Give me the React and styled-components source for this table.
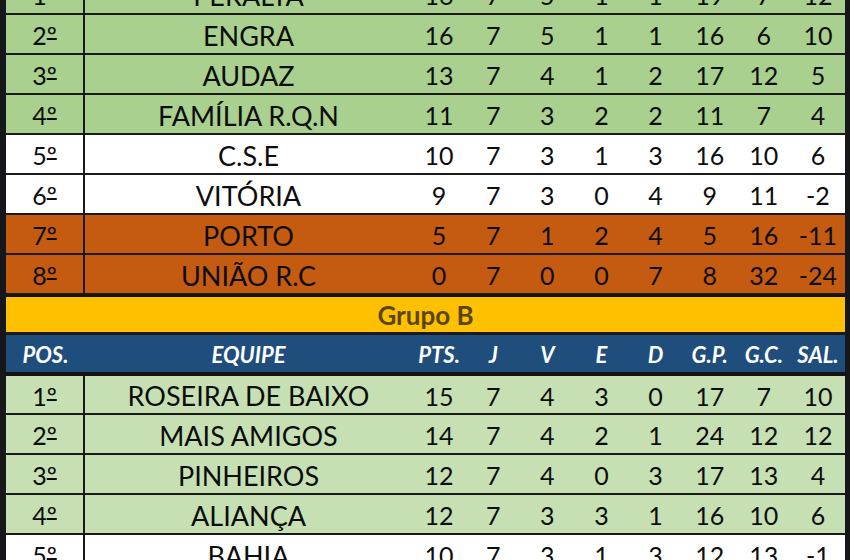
import React from "react";
import styled, { createGlobalStyle } from "styled-components";

const GlobalStyle = createGlobalStyle`
  html, body {
    margin: 0;
    padding: 0;
    background: #fff;
    overflow: hidden;
  }
  body {
    font-family: Lato, "Open Sans", sans-serif;
  }
`;

const groupA = [
  [1, "PERALTA", 16, 7, 5, 1, 1, 19, 7, 12],
  [2, "ENGRA", 16, 7, 5, 1, 1, 16, 6, 10],
  [3, "AUDAZ", 13, 7, 4, 1, 2, 17, 12, 5],
  [4, "FAMÍLIA R.Q.N", 11, 7, 3, 2, 2, 11, 7, 4],
  [5, "C.S.E", 10, 7, 3, 1, 3, 16, 10, 6],
  [6, "VITÓRIA", 9, 7, 3, 0, 4, 9, 11, -2],
  [7, "PORTO", 5, 7, 1, 2, 4, 5, 16, -11],
  [8, "UNIÃO R.C", 0, 7, 0, 0, 7, 8, 32, -24],
];

const groupB = [
  [1, "ROSEIRA DE BAIXO", 15, 7, 4, 3, 0, 17, 7, 10],
  [2, "MAIS AMIGOS", 14, 7, 4, 2, 1, 24, 12, 12],
  [3, "PINHEIROS", 12, 7, 4, 0, 3, 17, 13, 4],
  [4, "ALIANÇA", 12, 7, 3, 3, 1, 16, 10, 6],
  [5, "BAHIA", 10, 7, 3, 1, 3, 12, 13, -1],
];

const headers = ["PTS.", "J", "V", "E", "D", "G.P.", "G.C.", "SAL."];

const colorsA = ["green", "green", "green", "green", "white", "white", "orange", "orange"];
const colorsB = ["light", "light", "light", "light", "white"];

const fills = {
  green: "#a9d08e",
  light: "#c6e0b4",
  white: "#ffffff",
  orange: "#c55a11",
};

const Sheet = styled.div`
  width: 850px;
  box-sizing: border-box;
  margin-top: -25px;
  border-left: 6px solid #15171a;
  border-right: 5px solid #15171a;
`;

const Row = styled.div`
  display: grid;
  grid-template-columns: 79px 327px repeat(8, 1fr);
  height: ${({ $h }) => $h || 40}px;
  box-sizing: border-box;
  border-bottom: 2px solid #1a1a1a;
  background: ${({ $fill }) => fills[$fill]};
  color: #0d0d0d;
  font-size: 25px;
`;

const Cell = styled.div`
  display: flex;
  align-items: center;
  justify-content: center;
  white-space: nowrap;
  padding-top: 2px;
`;

const PosCell = styled(Cell)`
  border-right: 2px solid #1a1a1a;
`;

const NameCell = styled(Cell)`
  font-size: 27px;
`;

const Ord = styled.span`
  text-decoration: underline;
  text-decoration-thickness: 2px;
  text-underline-offset: -7px;
  text-decoration-skip-ink: none;
`;

const GroupTitle = styled.div`
  height: 40px;
  box-sizing: border-box;
  border-top: 2px solid #111;
  border-bottom: 3px solid #1a1a1a;
  background: #ffc000;
  display: flex;
  align-items: center;
  justify-content: center;
  font-weight: 700;
  font-size: 26px;
  color: #5a4608;
`;

const HeadRow = styled.div`
  display: grid;
  grid-template-columns: 79px 327px repeat(8, 1fr);
  height: 41px;
  box-sizing: border-box;
  border-bottom: 4px solid #141414;
  background: #1f4e7d;
  color: #fff;
  font-size: 22px;
  font-weight: 700;
  font-style: italic;
`;

const TeamRow = ({ data, fill, h }) => (
  <Row $fill={fill} $h={h}>
    <PosCell>
      {data[0]}
      <Ord>º</Ord>
    </PosCell>
    <NameCell>{data[1]}</NameCell>
    {data.slice(2).map((v, i) => (
      <Cell key={i}>{v}</Cell>
    ))}
  </Row>
);

const App = () => {
  return (
    <>
      <GlobalStyle />
      <Sheet>
        {groupA.map((r, i) => (
          <TeamRow key={r[1]} data={r} fill={colorsA[i]} />
        ))}
        <GroupTitle>Grupo B</GroupTitle>
        <HeadRow>
          <Cell>POS.</Cell>
          <Cell>EQUIPE</Cell>
          {headers.map((h) => (
            <Cell key={h}>{h}</Cell>
          ))}
        </HeadRow>
        {groupB.map((r, i) => (
          <TeamRow key={r[1]} data={r} fill={colorsB[i]} h={i === 0 ? 39 : 40} />
        ))}
      </Sheet>
    </>
  );
};

export default App;
